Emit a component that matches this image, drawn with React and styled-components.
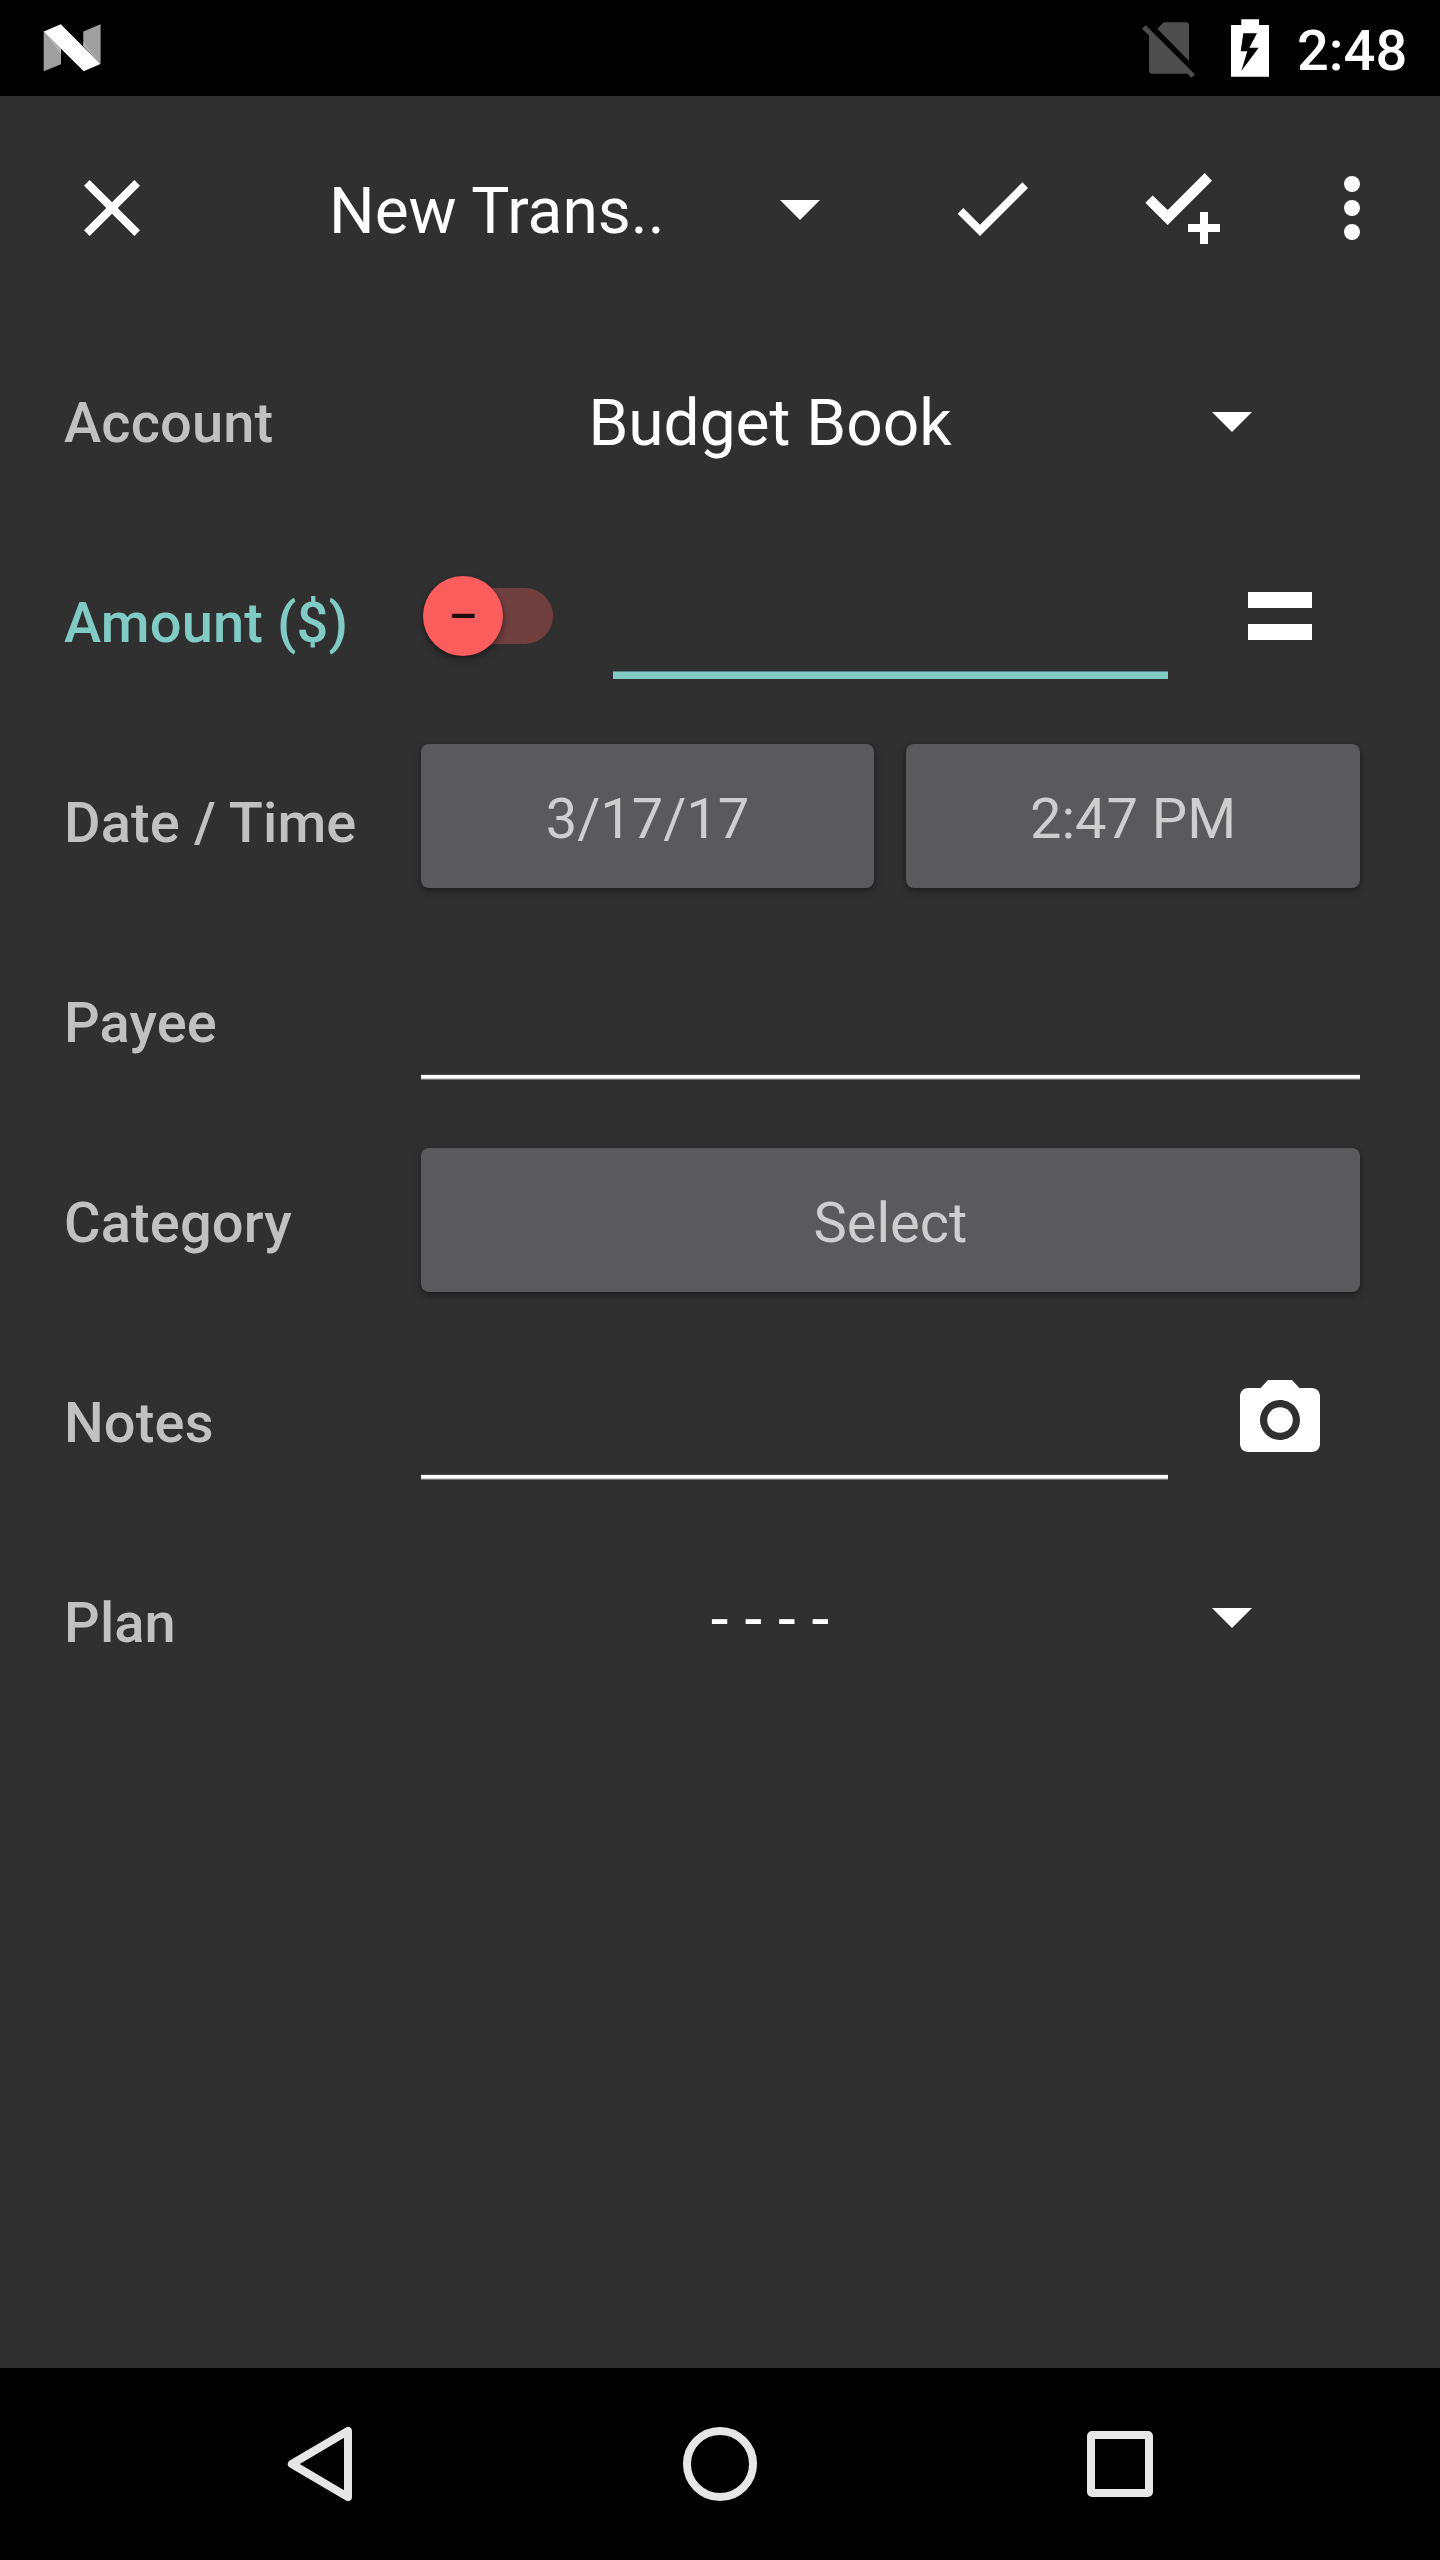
import React from "react";
import styled, { createGlobalStyle } from "styled-components";

const GlobalStyle = createGlobalStyle`
  *, *::before, *::after { box-sizing: border-box; }
  body { margin: 0; background: #303030; }
`;

const Screen = styled.div`
  display: flex;
  flex-direction: column;
  width: 1440px;
  height: 2560px;
  background: #303030;
  color: #fff;
  font-family: Roboto, "Noto Sans", sans-serif;
  overflow: hidden;
`;

const StatusBar = styled.header`
  display: flex;
  align-items: center;
  flex: none;
  height: 96px;
  padding: 0 31px 0 40px;
  background: #000;
`;

const StatusIcons = styled.div`
  display: flex;
  align-items: center;
  gap: 14px;
  margin-left: auto;
`;

const Clock = styled.time`
  width: 112px;
  margin-left: -3px;
  padding-top: 6px;
  font-size: 56px;
  font-weight: 500;
  line-height: 66px;
  white-space: nowrap;
`;

const Glyph = styled.svg`
  display: block;
  flex: none;
  width: ${(p) => p.$w || 96}px;
  height: ${(p) => p.$h || p.$w || 96}px;
  fill: currentColor;
`;

const Toolbar = styled.nav`
  display: flex;
  align-items: center;
  flex: none;
  height: 224px;
  padding: 0 40px 0 64px;
`;

const IconButton = styled.button`
  display: block;
  flex: none;
  margin: 0 0 0 ${(p) => p.$gap || 0}px;
  padding: 0;
  border: 0;
  background: none;
  color: inherit;
`;

const Title = styled.h1`
  width: 423px;
  margin: 0 0 0 169px;
  padding-top: 8px;
  font-size: 64px;
  font-weight: 400;
  line-height: 76px;
  white-space: nowrap;
`;

const Form = styled.main`
  flex: 1;
  padding: 0 80px 0 64px;
`;

const Row = styled.div`
  display: grid;
  grid-template-columns: 357px 1fr;
  align-items: center;
  height: 200px;
`;

const Label = styled.label`
  padding-top: 6px;
  font-size: 56px;
  font-weight: 500;
  line-height: 66px;
  letter-spacing: 0.14px;
  white-space: nowrap;
  color: ${(p) => (p.$active ? "#80cbc4" : "#c1c1c1")};
`;

const Field = styled.div`
  display: flex;
  align-items: center;
  height: ${(p) => p.$height || 200}px;
  margin-bottom: ${(p) => p.$lift || 0}px;
`;

const SpinnerText = styled.div`
  flex: none;
  width: 698px;
  margin-right: 65px;
  padding-top: 8px;
  font-size: 64px;
  line-height: 76px;
  text-align: center;
  white-space: pre;
`;

const FlatButton = styled.button`
  flex: ${(p) => (p.$width ? `0 0 ${p.$width}px` : "1")};
  height: 144px;
  margin: 0;
  padding: 6px 0 0;
  border: 0;
  border-radius: 8px;
  background: #5a5a5c;
  box-shadow: 0 4px 9px rgba(0, 0, 0, 0.28), 0 1px 4px rgba(0, 0, 0, 0.2);
  color: #cecece;
  font: 400 56px/66px Roboto, "Noto Sans", sans-serif;

  & + & { margin-left: 32px; }
`;

const TextInput = styled.input`
  flex: none;
  width: ${(p) => p.$width}px;
  height: 120px;
  margin: 0;
  padding: 0 0 12px;
  border: 0;
  outline: 0;
  border-radius: 0;
  color: #fff;
  font: 400 64px Roboto, "Noto Sans", sans-serif;
  background: ${(p) =>
    p.$active
      ? "linear-gradient(#5b8480 0 1px, #80cbc4 1px 8px, transparent 8px) 0 100% / 100% 9px no-repeat"
      : "linear-gradient(#4a4a4a 0 1px, #fff 1px 4px, #cfcfcf 4px 5px, #757575 5px 6px) 0 100% / 100% 6px no-repeat"};
`;

const Switch = styled.div`
  display: flex;
  align-items: center;
  flex: none;
  width: 118px;
  height: 56px;
  margin: 0 60px 8px 14px;
  border-radius: 28px;
  background: #703f3f;
`;

const Thumb = styled.span`
  display: flex;
  align-items: center;
  justify-content: center;
  flex: none;
  width: 80px;
  height: 80px;
  margin-left: -12px;
  padding-top: 2px;
  border-radius: 50%;
  background: #fd5d5c;
  box-shadow: 0 4px 7px rgba(0, 0, 0, 0.38), 0 0 3px rgba(0, 0, 0, 0.2);
  color: #200c0c;
  font-size: 45px;
  font-weight: 500;
  line-height: 54px;
`;

const Side = styled.div`
  display: flex;
  justify-content: center;
  width: 96px;
  margin: 0 0 ${(p) => p.$lift || 0}px 64px;
`;

const NavBar = styled.footer`
  display: flex;
  align-items: center;
  justify-content: center;
  gap: 304px;
  flex: none;
  height: 192px;
  background: #000;
  color: #e6e6e6;
`;

const Caret = () => (
  <Glyph viewBox="0 0 24 24"><path d="M7 10l5 5 5-5z" /></Glyph>
);

function Status() {
  return (
    <StatusBar>
      <Glyph $w={64} viewBox="40 16 64 64">
        <path fill="#9f9f9f" d="M43.7 31.5L61 49V64.2L43.7 71.3zM83.3 31.5L100.6 24.3V64L83.3 46z" />
        <path fill="#b4b4b4" d="M43.7 31.5L61 49V54zM100.6 64L83.3 46V42z" />
        <path fill="#fff" d="M43.7 31.5L60.8 24.3L100.4 64L83.7 71.3z" />
      </Glyph>
      <StatusIcons>
        <Glyph $w={64} viewBox="1136 16 64 64" color="#4d4d4d">
          <path d="M1157.3 28.7L1163.7 22.3H1186Q1189 22.3 1189 25.3V61z" />
          <path d="M1142 28.7L1145.7 25.3L1195 74.5L1191.3 77.8L1187 73.6Q1186.5 73.8 1186 73.8H1152.3Q1149 73.8 1149 70.5V35.6z" />
        </Glyph>
        <Glyph $w={72} $h={64} viewBox="1214 16 72 64">
          <path fillRule="evenodd" d="M1231 25H1241.3V19.2H1259V25H1269V76.8H1231zM1243.3 33.3L1240.7 51.3H1247.3L1241.3 71L1258.7 47.7H1249.3L1257 33.3z" />
        </Glyph>
        <Clock>2:48</Clock>
      </StatusIcons>
    </StatusBar>
  );
}

export default function App() {
  return (
    <Screen>
      <GlobalStyle />
      <Status />
      <Toolbar>
        <IconButton aria-label="Close">
          <Glyph viewBox="0 0 24 24">
            <path d="M19 6.41L17.59 5 12 10.59 6.41 5 5 6.41 10.59 12 5 17.59 6.41 19 12 13.41 17.59 19 19 17.59 13.41 12z" />
          </Glyph>
        </IconButton>
        <Title>New Trans..</Title>
        <IconButton aria-label="Change type"><Caret /></IconButton>
        <IconButton $gap={96} aria-label="Save">
          <Glyph viewBox="0 0 24 24">
            <path d="M9 16.17L4.83 12l-1.42 1.41L9 19 21 7l-1.41-1.41z" />
          </Glyph>
        </IconButton>
        <IconButton $gap={96} aria-label="Save and new">
          <Glyph viewBox="0 0 96 96">
            <path d="M31.7 65L9.3 42.7L16.7 35.5L31.7 50L68.7 13L76 20.8zM64 52h8v12h12v8H72v12h-8V72H52v-8h12z" />
          </Glyph>
        </IconButton>
        <IconButton $gap={72} aria-label="More">
          <Glyph viewBox="0 0 24 24">
            <circle cx="12" cy="6" r="2" />
            <circle cx="12" cy="12" r="2" />
            <circle cx="12" cy="18" r="2" />
          </Glyph>
        </IconButton>
      </Toolbar>

      <Form>
        <Row>
          <Label>Account</Label>
          <Field>
            <SpinnerText>Budget Book</SpinnerText>
            <Caret />
          </Field>
        </Row>
        <Row>
          <Label $active>Amount ($)</Label>
          <Field>
            <Switch><Thumb>–</Thumb></Switch>
            <TextInput $width={555} $active aria-label="Amount" />
            <Side $lift={8}>
              <Glyph $w={64} $h={48} viewBox="0 0 64 48">
                <path d="M0 0h64v16H0zM0 32h64v16H0z" />
              </Glyph>
            </Side>
          </Field>
        </Row>
        <Row>
          <Label>Date / Time</Label>
          <Field $height={144} $lift={8}>
            <FlatButton $width={453}>3/17/17</FlatButton>
            <FlatButton>2:47 PM</FlatButton>
          </Field>
        </Row>
        <Row>
          <Label>Payee</Label>
          <Field><TextInput $width={939} aria-label="Payee" /></Field>
        </Row>
        <Row>
          <Label>Category</Label>
          <Field><FlatButton>Select</FlatButton></Field>
        </Row>
        <Row>
          <Label>Notes</Label>
          <Field>
            <TextInput $width={747} aria-label="Notes" />
            <Side>
              <Glyph viewBox="0 0 24 24">
                <circle cx="12" cy="12" r="3.2" />
                <path d="M9 2L7.17 4H4c-1.1 0-2 .9-2 2v12c0 1.1.9 2 2 2h16c1.1 0 2-.9 2-2V6c0-1.1-.9-2-2-2h-3.17L15 2H9zm3 15c-2.76 0-5-2.24-5-5s2.24-5 5-5 5 2.24 5 5-2.24 5-5 5z" />
              </Glyph>
            </Side>
          </Field>
        </Row>
        <Row>
          <Label>Plan</Label>
          <Field $height={192} $lift={8}>
            <SpinnerText>- - - -</SpinnerText>
            <Caret />
          </Field>
        </Row>
      </Form>

      <NavBar>
        <Glyph viewBox="272 2416 96 96">
          <path d="M291.8 2464L348 2430.9V2497.1z" fill="none" stroke="currentColor" strokeWidth="8" strokeLinejoin="round" />
        </Glyph>
        <Glyph viewBox="0 0 96 96">
          <circle cx="48" cy="48" r="33" fill="none" stroke="currentColor" strokeWidth="8" />
        </Glyph>
        <Glyph viewBox="0 0 96 96">
          <rect x="19" y="19" width="58" height="58" rx="1" fill="none" stroke="currentColor" strokeWidth="8" strokeLinejoin="round" />
        </Glyph>
      </NavBar>
    </Screen>
  );
}
